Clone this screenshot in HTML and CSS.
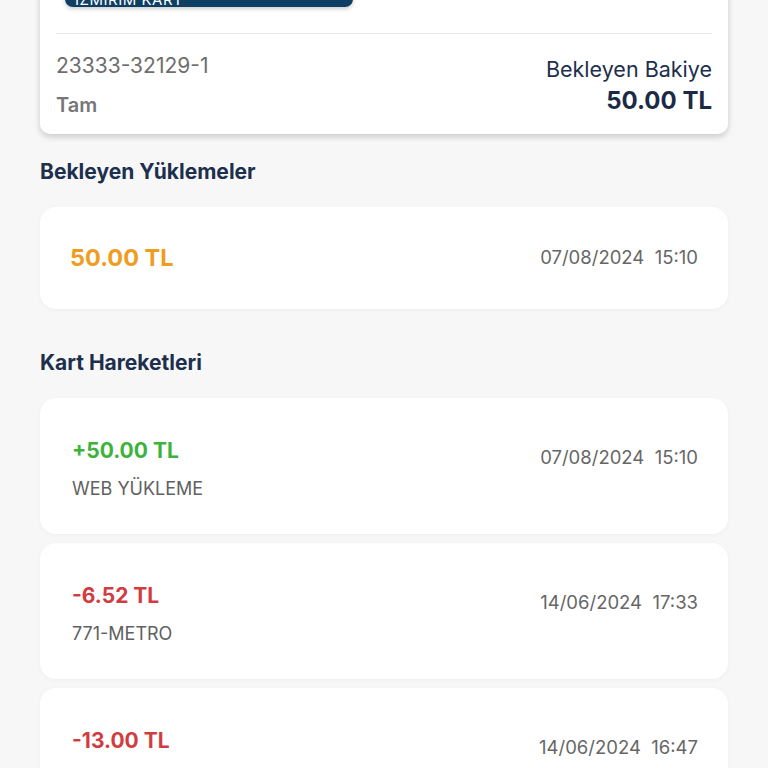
FILE: index.html
```html
<!DOCTYPE html>
<html lang="tr">
<head>
    <meta charset="UTF-8">
    <meta name="viewport" content="width=device-width, initial-scale=1.0">
    <title>Kart Detayı</title>
    <link rel="stylesheet" href="styles.css">
</head>
<body>

    <div class="page">
        <div class="card-info">
            <div class="card-type">İZMİRİM KART</div>
            <div class="card-divider"></div>
            <div class="card-row">
                <div class="card-left">
                    <span class="card-number">23333-32129-1</span>
                    <span class="card-tariff">Tam</span>
                </div>
                <div class="card-right">
                    <span class="balance-label">Bekleyen Bakiye</span>
                    <span class="balance-value">50.00 TL</span>
                </div>
            </div>
        </div>

        <h2 class="section-title">Bekleyen Yüklemeler</h2>
        <div class="item item-pending">
            <span class="amount pending">50.00 TL</span>
            <span class="item-date">07/08/2024&nbsp;&nbsp;15:10</span>
        </div>

        <h2 class="section-title section-title-gap">Kart Hareketleri</h2>
        <div class="item-list">
            <div class="item">
                <div class="item-main">
                    <span class="amount plus">+50.00 TL</span>
                    <span class="item-desc">WEB YÜKLEME</span>
                </div>
                <span class="item-date">07/08/2024&nbsp;&nbsp;15:10</span>
            </div>
            <div class="item">
                <div class="item-main">
                    <span class="amount minus">-6.52 TL</span>
                    <span class="item-desc">771-METRO</span>
                </div>
                <span class="item-date">14/06/2024&nbsp;&nbsp;17:33</span>
            </div>
            <div class="item">
                <div class="item-main">
                    <span class="amount minus">-13.00 TL</span>
                    <span class="item-desc">771-METRO</span>
                </div>
                <span class="item-date">14/06/2024&nbsp;&nbsp;16:47</span>
            </div>
        </div>
    </div>

</body>
</html>
```

FILE: styles.css
```css
body {
    margin: 0;
    font-family: Inter, "Noto Sans", sans-serif;
    background-color: #f7f7f8;
    color: #1c2f4d;
}

.page {
    padding: 0 40px 40px;
}

/* kart bilgisi (sayfa biraz kaydırılmış) */
.card-info {
    margin-top: -53px;
    background-color: #ffffff;
    border-radius: 0 0 10px 10px;
    box-shadow: 0 3px 6px rgba(0, 0, 0, 0.18);
    padding: 16px 16px 16px;
}

.card-type {
    margin-left: 9px;
    width: 288px;
    height: 44px;
    box-sizing: border-box;
    background-color: #0f3e64;
    border-radius: 8px;
    box-shadow: 0 2px 4px rgba(0, 0, 0, 0.2);
    color: #ffffff;
    font-size: 15px;
    line-height: 18px;
    letter-spacing: 0.5px;
    padding: 28px 10px 0;
    overflow: hidden;
}

.card-divider {
    height: 1px;
    background-color: #ebebeb;
    margin-top: 26px;
}

.card-row {
    display: flex;
    justify-content: space-between;
    padding-top: 19px;
}

.card-left,
.card-right {
    display: flex;
    flex-direction: column;
}

.card-right {
    align-items: flex-end;
    padding-top: 3px;
}

.card-number {
    font-size: 21px;
    line-height: 26px;
    color: #6e6e6e;
}

.card-tariff {
    margin-top: 13px;
    font-size: 20px;
    line-height: 26px;
    font-weight: 600;
    color: #777777;
}

.balance-label {
    font-size: 21.5px;
    line-height: 26px;
    color: #1c2f4d;
}

.balance-value {
    margin-top: 4px;
    font-size: 24px;
    line-height: 30px;
    font-weight: 700;
    color: #1b2b45;
}

.section-title {
    margin: 25px 0 22px;
    font-size: 21px;
    line-height: 26px;
    font-weight: 700;
    color: #1c2f4d;
}

.section-title-gap {
    margin-top: 41px;
}

.item-list {
    display: flex;
    flex-direction: column;
    gap: 9px;
}

.item {
    display: flex;
    justify-content: space-between;
    align-items: flex-start;
    background-color: #ffffff;
    border-radius: 16px;
    box-shadow: 0 1px 4px rgba(0, 0, 0, 0.04);
    padding: 38px 30px 33px 32px;
}

.item-pending {
    align-items: center;
    padding: 36px 30px 36px 30px;
}

.item-main {
    display: flex;
    flex-direction: column;
}

.amount {
    font-size: 21px;
    line-height: 30px;
    font-weight: 700;
}

.amount.pending {
    font-size: 23.5px;
    color: #f09c1e;
}

.amount.plus {
    color: #3bb33a;
}

.amount.minus {
    color: #d23c40;
}

.item-desc {
    margin-top: 11px;
    font-size: 18px;
    line-height: 24px;
    color: #616161;
}

.item-date {
    margin-top: 9px;
    font-size: 18.5px;
    line-height: 24px;
    color: #666666;
}

.item-pending .item-date {
    margin-top: -3px;
}
```
